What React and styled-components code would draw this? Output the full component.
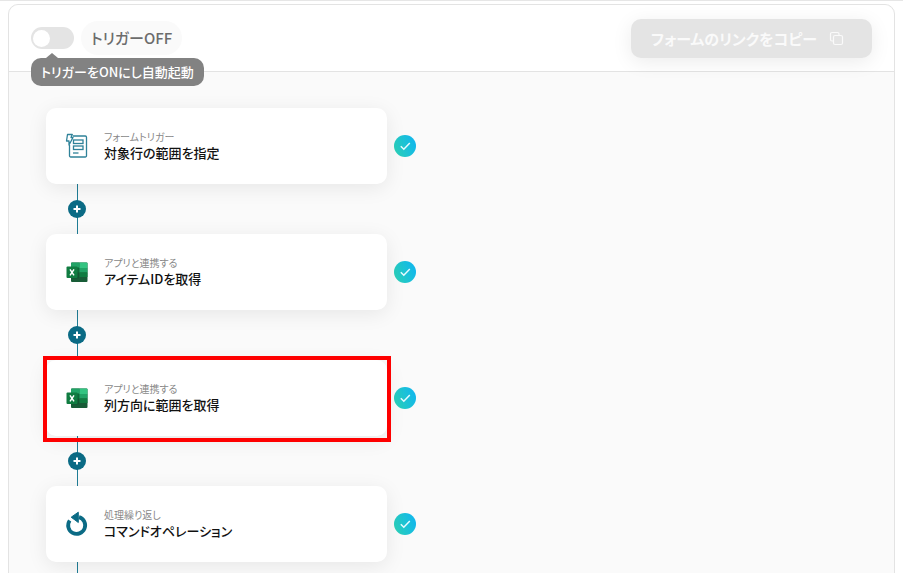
import React, { useState } from "react";
import styled, { createGlobalStyle } from "styled-components";

const GlobalStyle = createGlobalStyle`
  * {
    box-sizing: border-box;
  }
  body {
    margin: 0;
    background-color: #fff;
    font-family: "Noto Sans CJK JP", "Noto Sans", sans-serif;
    font-feature-settings: "palt";
    overflow: hidden;
  }
`;

const Page = styled.div`
  height: 100vh;
  padding: 3px 8px 0;
  border-top: 1px solid #e6e6e6;
  overflow: hidden;
`;

const Panel = styled.main`
  min-height: 110vh;
  border: 1px solid #e3e3e3;
  border-radius: 10px;
  background-color: #fafafa;
`;

const Header = styled.header`
  display: flex;
  align-items: center;
  justify-content: space-between;
  height: 67px;
  padding: 0 22px;
  border-bottom: 1px solid #e3e3e3;
  border-radius: 10px 10px 0 0;
  background-color: #fff;
`;

const TriggerGroup = styled.div`
  position: relative;
  display: flex;
  align-items: center;
  gap: 7px;
`;

const Switch = styled.input`
  appearance: none;
  display: flex;
  align-items: center;
  width: 43px;
  height: 22px;
  margin: 0;
  padding: 0 2px;
  border-radius: 11px;
  background-color: #e4e4e4;
  cursor: pointer;
  &::before {
    content: "";
    width: 17px;
    height: 17px;
    border-radius: 50%;
    background-color: #fff;
  }
  &:checked {
    justify-content: flex-end;
    background-color: #0b6b85;
  }
`;

const TriggerLabel = styled.label`
  padding: 0 10px;
  border-radius: 17px;
  background-color: #fafafa;
  color: #6c6c6c;
  font-size: 15px;
  font-weight: 500;
  line-height: 34px;
`;

const Tooltip = styled.div`
  position: absolute;
  top: 37px;
  left: 0;
  padding: 0 10px;
  border-radius: 10px;
  background-color: #828282;
  color: #fff;
  font-size: 13px;
  font-weight: 500;
  line-height: 28px;
  white-space: nowrap;
  &::before {
    content: "";
    position: absolute;
    top: -5px;
    left: 15px;
    border: solid transparent;
    border-width: 0 6px 5px;
    border-bottom-color: #828282;
  }
`;

const CopyButton = styled.button`
  display: flex;
  align-items: center;
  gap: 12px;
  height: 39px;
  padding: 0 28px 0 20px;
  border: none;
  border-radius: 10px;
  background-color: #e4e4e4;
  box-shadow: 0 4px 20px rgba(0, 0, 0, 0.08);
  color: #fafafa;
  font-family: inherit;
  font-feature-settings: inherit;
  font-size: 15px;
  font-weight: 700;
`;

const Flow = styled.ol`
  margin: 0;
  padding: 36px 37px;
  list-style: none;
`;

const StepRow = styled.div`
  display: flex;
  align-items: center;
  gap: 7px;
`;

const Card = styled.div`
  position: relative;
  display: flex;
  align-items: center;
  gap: 15px;
  width: 341px;
  height: 76px;
  padding: 0 19px;
  border-radius: 10px;
  background-color: #fff;
  box-shadow: 0 4px 20px rgba(0, 0, 0, 0.08);
`;

const Highlight = styled.div`
  position: absolute;
  inset: -4px -4px -6px -3px;
  border: 4px solid #fe0000;
  pointer-events: none;
`;

const StepText = styled.div`
  padding-bottom: 2px;
`;

const StepKind = styled.div`
  color: #888;
  font-size: 10px;
  line-height: 14px;
`;

const StepTitle = styled.div`
  color: #111;
  font-size: 13px;
  font-weight: 500;
  line-height: 17px;
`;

const Connector = styled.div`
  display: flex;
  align-items: center;
  justify-content: center;
  width: 62px;
  height: 50px;
  background: linear-gradient(#1f7d96, #1f7d96) 31px 0 / 1px 100% no-repeat;
`;

const AddButton = styled.button`
  display: flex;
  align-items: center;
  justify-content: center;
  width: 18px;
  height: 18px;
  padding: 0;
  border: none;
  border-radius: 50%;
  background-color: #0b6b85;
  cursor: pointer;
`;

const FormIcon = () => (
  <svg width="24" height="26" viewBox="0 0 24 26" fill="none" stroke="#2f8299" strokeWidth="1.3">
    <path d="M8 3h12.300a1.200 1.200 0 0 1 1.200 1.200v18.600a1.200 1.200 0 0 1-1.200 1.200H5.700a1.200 1.200 0 0 1-1.200-1.200V12" />
    <rect x="8.500" y="7" width="9.500" height="3.500" />
    <rect x="8.500" y="13" width="9.500" height="3.500" />
    <path d="M8 20h5.500" />
    <path d="M2.500 1.500h4.800L6 4.500h2L4 12V8H1.500z" fill="#fff" strokeLinejoin="round" />
  </svg>
);

const ExcelIcon = () => (
  <svg width="24" height="24" viewBox="0 0 24 24">
    <rect x="6" y="2.500" width="16.500" height="19.500" rx="1" fill="#185c37" />
    <path d="M7 2.500h7.500V8H6V3.500a1 1 0 0 1 1-1z" fill="#21a366" />
    <path d="M14.500 2.500h7a1 1 0 0 1 1 1V8h-8z" fill="#33c481" />
    <path d="M6 8h8.500v4.500H6z" fill="#107c41" />
    <path d="M14.500 8h8v4.500h-8z" fill="#21a366" />
    <path d="M14.500 12.500h8V17h-8z" fill="#107c41" />
    <path d="M6 7h8v11.500H6z" fill="#0b4a2a" opacity="0.4" />
    <rect x="1.500" y="6.500" width="11" height="11.500" rx="1" fill="#107c41" />
    <path d="M5 9.300l4 6M9 9.300l-4 6" stroke="#fff" strokeWidth="1.500" />
  </svg>
);

const RepeatIcon = () => (
  <svg width="24" height="26" viewBox="0 0 24 26">
    <path d="M4.700 9.500A8.500 8.500 0 1 0 14 6.200" fill="none" stroke="#0b6b85" strokeWidth="3.800" />
    <path d="M13.300 1.200v10.300L6.200 6.200z" fill="#0b6b85" stroke="#0b6b85" strokeLinejoin="round" />
  </svg>
);

const CheckIcon = () => (
  <svg width="22" height="22" viewBox="0 0 22 22" role="img" aria-label="完了">
    <defs>
      <linearGradient id="done" x1="0" y1="0.7" x2="1" y2="0.3">
        <stop offset="0" stopColor="#2bd0b8" />
        <stop offset="1" stopColor="#10b6ee" />
      </linearGradient>
    </defs>
    <circle cx="11" cy="11" r="11" fill="url(#done)" />
    <path d="M6.800 11.300l3 3 6-6.300" fill="none" stroke="#e8fbff" strokeWidth="1.500" />
  </svg>
);

const PlusIcon = () => (
  <svg width="8" height="8" viewBox="0 0 8 8">
    <path d="M4 .5v7M.5 4h7" stroke="#fff" strokeWidth="2" />
  </svg>
);

const CopyIcon = () => (
  <svg width="15" height="15" viewBox="0 0 15 15" fill="none" stroke="#fafafa" strokeWidth="1.200">
    <rect x="4.500" y="4.500" width="9" height="9" rx="1.500" />
    <path d="M4.500 10H3a1.500 1.500 0 0 1-1.500-1.500V3A1.500 1.500 0 0 1 3 1.500h5.500A1.500 1.500 0 0 1 10 3v1.500" />
  </svg>
);

const steps = [
  { kind: "フォームトリガー", title: "対象行の範囲を指定", icon: FormIcon },
  { kind: "アプリと連携する", title: "アイテムIDを取得", icon: ExcelIcon },
  { kind: "アプリと連携する", title: "列方向に範囲を取得", icon: ExcelIcon, highlighted: true },
  { kind: "処理繰り返し", title: "コマンドオペレーション", icon: RepeatIcon },
];

const App = () => {
  const [enabled, setEnabled] = useState(false);

  return (
    <Page>
      <GlobalStyle />
      <Panel>
        <Header>
          <TriggerGroup>
            <Switch
              id="trigger"
              type="checkbox"
              role="switch"
              checked={enabled}
              onChange={(e) => setEnabled(e.target.checked)}
            />
            <TriggerLabel htmlFor="trigger">トリガー{enabled ? "ON" : "OFF"}</TriggerLabel>
            {!enabled && <Tooltip role="tooltip">トリガーをONにし自動起動</Tooltip>}
          </TriggerGroup>
          <CopyButton type="button" disabled={!enabled}>
            フォームのリンクをコピー <CopyIcon />
          </CopyButton>
        </Header>
        <Flow>
          {steps.map(({ kind, title, icon: Icon, highlighted }) => (
            <li key={title}>
              <StepRow>
                <Card>
                  <Icon />
                  <StepText>
                    <StepKind>{kind}</StepKind>
                    <StepTitle>{title}</StepTitle>
                  </StepText>
                  {highlighted && <Highlight />}
                </Card>
                <CheckIcon />
              </StepRow>
              <Connector>
                <AddButton type="button" aria-label="追加">
                  <PlusIcon />
                </AddButton>
              </Connector>
            </li>
          ))}
        </Flow>
      </Panel>
    </Page>
  );
};

export default App;
